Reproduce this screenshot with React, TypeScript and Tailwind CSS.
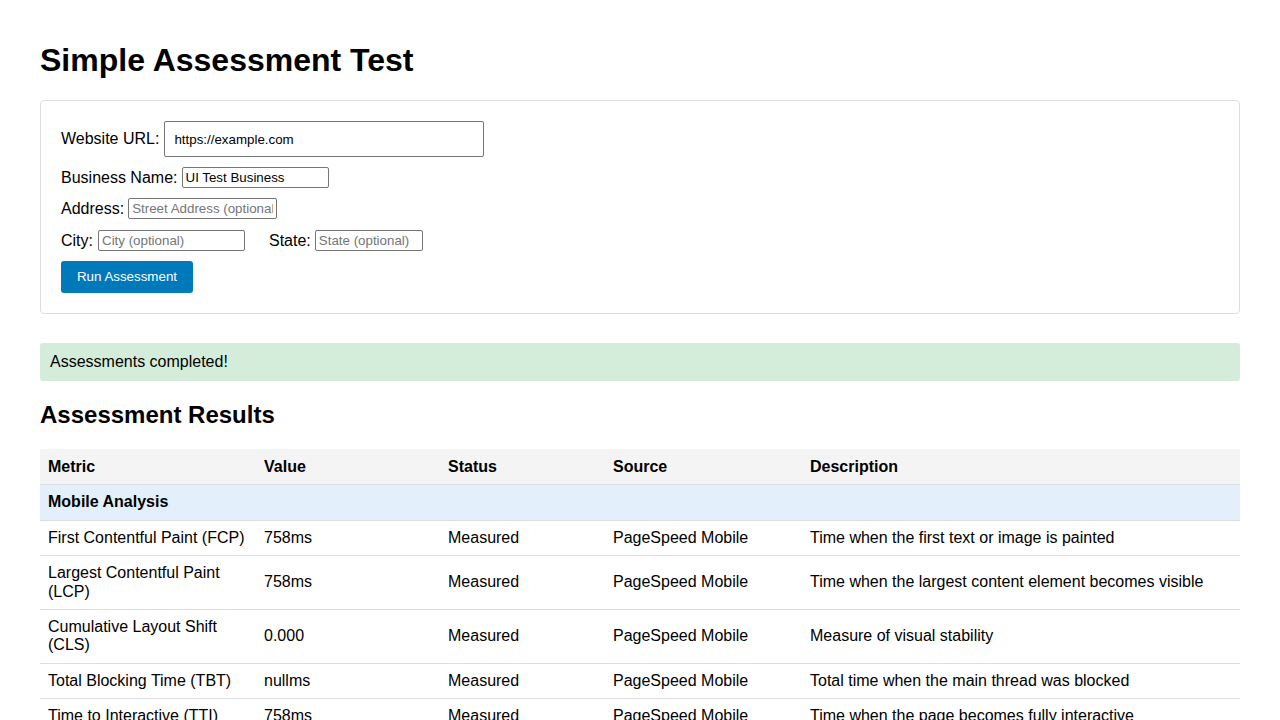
import React from "react";

const rows = [
  { metric: "First Contentful Paint (FCP)", value: "758ms", desc: "Time when the first text or image is painted" },
  { metric: "Largest Contentful Paint (LCP)", value: "758ms", desc: "Time when the largest content element becomes visible" },
  { metric: "Cumulative Layout Shift (CLS)", value: "0.000", desc: "Measure of visual stability" },
  { metric: "Total Blocking Time (TBT)", value: "nullms", desc: "Total time when the main thread was blocked" },
  { metric: "Time to Interactive (TTI)", value: "758ms", desc: "Time when the page becomes fully interactive" },
];

const inputCls =
  "border border-[#767676] rounded-[2px] text-[13.33px] px-[3px] text-black placeholder:text-[#757575] outline-none bg-white";

export default function App() {
  return (
    <div className="min-h-screen bg-white px-10 text-black font-['Liberation_Sans',Arial,sans-serif]">
      <h1 className="pt-[42px] text-[32px] leading-[37px] font-bold">Simple Assessment Test</h1>

      <div className="mt-[21px] border border-[#ddd] rounded p-5">
        <div className="flex items-center gap-[5px] mb-[10px] text-base leading-[18px]">
          <label>Website URL:</label>
          <input
            className="w-[320px] h-[36px] border border-[#767676] rounded-[2px] text-[13.33px] px-[9px] outline-none"
            defaultValue="https://example.com"
          />
        </div>
        <div className="flex items-center gap-[4px] mb-[10px] text-base leading-[18px]">
          <label>Business Name:</label>
          <input className={`${inputCls} w-[147px] h-[21px]`} defaultValue="UI Test Business" />
        </div>
        <div className="flex items-center gap-[4px] mb-[11px] text-base leading-[18px]">
          <label>Address:</label>
          <input className={`${inputCls} w-[149px] h-[21px]`} placeholder="Street Address (optional)" />
        </div>
        <div className="flex items-center mb-[10px] text-base leading-[18px]">
          <label>City:</label>
          <input className={`${inputCls} ml-[5px] w-[147px] h-[21px]`} placeholder="City (optional)" />
          <label className="ml-[24px]">State:</label>
          <input className={`${inputCls} ml-[4px] w-[108px] h-[21px]`} placeholder="State (optional)" />
        </div>
        <button className="block w-[132px] h-[32px] bg-[#0079ba] text-white text-[13.33px] rounded-[3px]">
          Run Assessment
        </button>
      </div>

      <div className="mt-[29px] bg-[#d4edda] rounded-[3px] px-[10px] py-[10px] text-base leading-[18px]">
        Assessments completed!
      </div>

      <h2 className="mt-5 text-2xl leading-[28px] font-bold">Assessment Results</h2>

      <table className="mt-5 w-full border-collapse text-base leading-[18.4px] text-left">
        <thead>
          <tr className="bg-[#f4f4f4] border-b border-[#ddd]">
            <th className="w-[216px] px-2 py-[8.5px] font-bold">Metric</th>
            <th className="w-[184px] px-2 py-[8.5px] font-bold">Value</th>
            <th className="w-[165px] px-2 py-[8.5px] font-bold">Status</th>
            <th className="w-[197px] px-2 py-[8.5px] font-bold">Source</th>
            <th className="px-2 py-[8.5px] font-bold">Description</th>
          </tr>
        </thead>
        <tbody>
          <tr className="bg-[#e3f0fb] border-b border-[#ddd]">
            <td colSpan={5} className="px-2 py-2 font-bold">Mobile Analysis</td>
          </tr>
          {rows.map((r) => (
            <tr key={r.metric} className="border-b border-[#ddd]">
              <td className="px-2 py-2">{r.metric}</td>
              <td className="px-2 py-2">{r.value}</td>
              <td className="px-2 py-2">Measured</td>
              <td className="px-2 py-2">PageSpeed Mobile</td>
              <td className="px-2 py-2">{r.desc}</td>
            </tr>
          ))}
        </tbody>
      </table>
    </div>
  );
}
